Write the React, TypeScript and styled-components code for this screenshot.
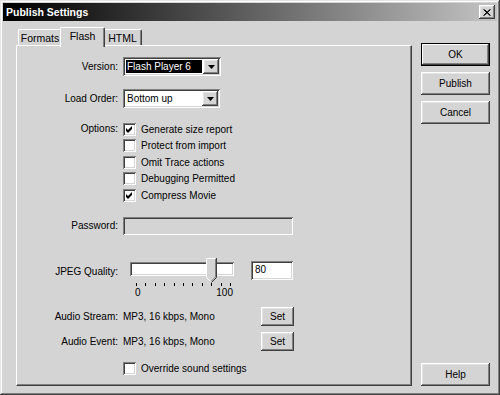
import styled, { createGlobalStyle } from "styled-components";

const FACE = "#d4d4d4";

const GlobalStyle = createGlobalStyle`
  html, body { margin: 0; padding: 0; background: ${FACE}; }
  body {
    font-family: "Liberation Sans", Arial, sans-serif;
    font-size: 10px;
    color: #000;
  }
`;

const raised = `
  background: ${FACE};
  box-shadow: inset -1px -1px #404040, inset 1px 1px #ffffff,
    inset -2px -2px #808080, inset 2px 2px #e4e4e4;
`;

const sunken = `
  box-shadow: inset 1px 1px #808080, inset -1px -1px #ffffff,
    inset 2px 2px #404040, inset -2px -2px ${FACE};
`;

const Window = styled.div`
  width: 500px;
  height: 395px;
  box-sizing: border-box;
  padding: 3px;
  background: ${FACE};
  box-shadow: inset -1px -1px #404040, inset 1px 1px #e4e4e4,
    inset -2px -2px #808080, inset 2px 2px #ffffff;
  display: flex;
  flex-direction: column;
`;

const TitleBar = styled.div`
  height: 18px;
  display: flex;
  align-items: center;
  justify-content: space-between;
  padding: 0 2px 0 3px;
  background: linear-gradient(to right, #000000 0%, #141414 12%, #c4c4c4 100%);
  color: #fff;
  font-weight: bold;
  font-size: 10.5px;
`;

const CloseButton = styled.div`
  width: 16px;
  height: 14px;
  display: flex;
  align-items: center;
  justify-content: center;
  ${raised}
`;

const Body = styled.div`
  flex: 1;
  display: flex;
  padding: 6px 7px 6px 13px;
`;

const LeftColumn = styled.div`
  width: 396px;
  display: flex;
  flex-direction: column;
`;

const TabStrip = styled.div`
  height: 18px;
  display: flex;
  align-items: flex-end;
  padding-left: 2px;
  position: relative;
  z-index: 2;
`;

const Tab = styled.div<{ $active?: boolean; $w: number }>`
  box-sizing: border-box;
  width: ${(p) => p.$w + (p.$active ? 4 : 0)}px;
  height: ${(p) => (p.$active ? 20 : 16)}px;
  margin: ${(p) => (p.$active ? "0 -2px -2px -2px" : "0")};
  background: ${FACE};
  border-top: 1px solid #fff;
  border-left: 1px solid #fff;
  border-right: 1px solid #404040;
  border-radius: 2px 2px 0 0;
  box-shadow: inset -1px 0 #808080;
  display: flex;
  justify-content: center;
  padding-top: 2px;
  font-size: 10.5px;
  position: relative;
  z-index: ${(p) => (p.$active ? 2 : 1)};
`;

const Panel = styled.div`
  flex: 1;
  box-sizing: border-box;
  border-top: 1px solid #fff;
  border-left: 1px solid #fff;
  border-right: 1px solid #404040;
  border-bottom: 1px solid #404040;
  box-shadow: inset -1px -1px #808080;
  display: flex;
  flex-direction: column;
  padding-top: 11px;
`;

const Row = styled.div<{ $mt?: number; $h?: number; $top?: boolean }>`
  display: flex;
  align-items: ${(p) => (p.$top ? "flex-start" : "center")};
  margin-top: ${(p) => p.$mt ?? 0}px;
  ${(p) => (p.$h ? `height: ${p.$h}px;` : "")}
`;

const Label = styled.div<{ $mt?: number; $lh?: number }>`
  width: 106px;
  box-sizing: border-box;
  padding-right: 5px;
  text-align: right;
  flex-shrink: 0;
  margin-top: ${(p) => p.$mt ?? 0}px;
  ${(p) => (p.$lh ? `line-height: ${p.$lh}px;` : "")}
`;

const Combo = styled.div<{ $w: number }>`
  width: ${(p) => p.$w}px;
  height: 19px;
  box-sizing: border-box;
  background: #fff;
  ${sunken}
  display: flex;
  padding: 2px;
`;

const ComboText = styled.div<{ $selected?: boolean }>`
  flex: 1;
  margin: 1px;
  padding-left: 1px;
  display: flex;
  align-items: center;
  background: ${(p) => (p.$selected ? "#000" : "transparent")};
  color: ${(p) => (p.$selected ? "#fff" : "#000")};
`;

const ArrowButton = styled.div`
  width: 16px;
  display: flex;
  align-items: center;
  justify-content: center;
  ${raised}
`;

const CheckList = styled.div`
  display: flex;
  flex-direction: column;
`;

const CheckRow = styled.div`
  height: 16.5px;
  display: flex;
  align-items: center;
  gap: 5px;
`;

const Box = styled.div`
  width: 13px;
  height: 13px;
  box-sizing: border-box;
  background: #fff;
  ${sunken}
  display: flex;
  align-items: center;
  justify-content: center;
`;

const TextField = styled.div<{ $w: number; $h: number; $disabled?: boolean }>`
  width: ${(p) => p.$w}px;
  height: ${(p) => p.$h}px;
  box-sizing: border-box;
  background: ${(p) => (p.$disabled ? FACE : "#fff")};
  ${sunken}
  padding: 3px 0 0 4px;
  line-height: 12px;
`;

const SliderBox = styled.div`
  width: 120px;
  height: 40px;
  position: relative;
  display: flex;
  flex-direction: column;
`;

const Track = styled.div`
  width: 104px;
  height: 14px;
  box-sizing: border-box;
  margin: 4px 0 0 7px;
  background: #fff;
  ${sunken}
`;

const Ticks = styled.div`
  width: 95px;
  height: 3px;
  margin: 7px 0 0 13px;
  display: flex;
  justify-content: space-between;
`;

const Tick = styled.div`
  width: 1px;
  height: 3px;
  background: #000;
`;

const TickLabels = styled.div`
  width: 98px;
  margin: 1px 0 0 12px;
  display: flex;
  justify-content: space-between;
  line-height: 11px;
`;

const Thumb = styled.svg`
  position: absolute;
  top: 0;
`;

const ValueArea = styled.div`
  width: 171px;
  display: flex;
  align-items: center;
  justify-content: space-between;
`;

const SmallButton = styled.div`
  width: 33px;
  height: 19px;
  box-sizing: border-box;
  display: flex;
  align-items: center;
  justify-content: center;
  ${raised}
`;

const ButtonColumn = styled.div`
  width: 69px;
  margin-left: 9px;
  padding-top: 16px;
  display: flex;
  flex-direction: column;
  gap: 6px;
`;

const DialogButton = styled.div<{ $default?: boolean }>`
  height: 23px;
  box-sizing: border-box;
  display: flex;
  align-items: center;
  justify-content: center;
  background: ${FACE};
  box-shadow: ${(p) =>
    p.$default
      ? `inset 0 0 0 1px #000, inset -2px -2px #404040, inset 2px 2px #ffffff, inset -3px -3px #808080`
      : `inset -1px -1px #404040, inset 1px 1px #ffffff, inset -2px -2px #808080, inset 2px 2px #e4e4e4`};
`;

const HelpButton = styled(DialogButton)`
  margin-top: auto;
`;

const Check = () => (
  <svg width="7" height="7" viewBox="0 0 7 7">
    <polygon points="0,2 2,4 6,0 6,3 2,7 0,5" fill="#000" />
  </svg>
);

const DownArrow = () => (
  <svg width="7" height="4" viewBox="0 0 7 4">
    <polygon points="0,0 7,0 3.5,4" fill="#000" />
  </svg>
);

const CheckItem = ({ label, checked }: { label: string; checked?: boolean }) => (
  <CheckRow>
    <Box>{checked && <Check />}</Box>
    <span>{label}</span>
  </CheckRow>
);

const options = [
  { label: "Generate size report", checked: true },
  { label: "Protect from import" },
  { label: "Omit Trace actions" },
  { label: "Debugging Permitted" },
  { label: "Compress Movie", checked: true },
];

const JPEG_QUALITY = 80;

export default function App() {
  // thumb centred on the tick for the current value
  const thumbLeft = 13 + (JPEG_QUALITY / 100) * 94 - 5;

  return (
    <>
      <GlobalStyle />
      <Window>
        <TitleBar>
          <span>Publish Settings</span>
          <CloseButton>
            <svg width="8" height="7" viewBox="0 0 8 7">
              <path d="M0.5 0.5 L7 6.5 M1.5 0.5 L7.5 6.5 M7 0.5 L0.5 6.5 M7.5 0.5 L1 6.5" stroke="#000" strokeWidth="1" />
            </svg>
          </CloseButton>
        </TitleBar>
        <Body>
          <LeftColumn>
            <TabStrip>
              <Tab $w={44}>Formats</Tab>
              <Tab $w={41} $active>
                Flash
              </Tab>
              <Tab $w={39}>HTML</Tab>
            </TabStrip>
            <Panel>
              <Row $h={19}>
                <Label>Version:</Label>
                <Combo $w={98}>
                  <ComboText $selected>Flash Player 6</ComboText>
                  <ArrowButton>
                    <DownArrow />
                  </ArrowButton>
                </Combo>
              </Row>
              <Row $mt={13} $h={19}>
                <Label>Load Order:</Label>
                <Combo $w={97}>
                  <ComboText>Bottom up</ComboText>
                  <ArrowButton>
                    <DownArrow />
                  </ArrowButton>
                </Combo>
              </Row>
              <Row $mt={13} $top>
                <Label $lh={16.5}>Options:</Label>
                <CheckList>
                  {options.map((o) => (
                    <CheckItem key={o.label} label={o.label} checked={o.checked} />
                  ))}
                </CheckList>
              </Row>
              <Row $mt={13} $h={18}>
                <Label>Password:</Label>
                <TextField $w={170} $h={18} $disabled />
              </Row>
              <Row $mt={23} $top>
                <Label $mt={7} $lh={13}>
                  JPEG Quality:
                </Label>
                <SliderBox>
                  <Track />
                  <Ticks>
                    {Array.from({ length: 11 }).map((_, i) => (
                      <Tick key={i} />
                    ))}
                  </Ticks>
                  <TickLabels>
                    <span>0</span>
                    <span>100</span>
                  </TickLabels>
                  <Thumb width="11" height="25" viewBox="0 0 11 25" style={{ left: thumbLeft }}>
                    <polygon points="0,0 10,0 10,19 5,24 0,19" fill={FACE} />
                    <polyline points="0.5,19 0.5,0.5 9.5,0.5" fill="none" stroke="#fff" />
                    <polyline points="10.5,0 10.5,19.5 5.5,24.5" fill="none" stroke="#404040" />
                    <polyline points="9.5,1 9.5,19 5,23.5" fill="none" stroke="#808080" />
                    <line x1="0.5" y1="19.5" x2="4.5" y2="23.5" stroke="#fff" />
                  </Thumb>
                </SliderBox>
                <TextField $w={42} $h={19} style={{ marginTop: 3, marginLeft: 8 }}>
                  {JPEG_QUALITY}
                </TextField>
              </Row>
              <Row $mt={9} $h={19}>
                <Label>Audio Stream:</Label>
                <ValueArea>
                  <span>MP3, 16 kbps, Mono</span>
                  <SmallButton>Set</SmallButton>
                </ValueArea>
              </Row>
              <Row $mt={6} $h={19}>
                <Label>Audio Event:</Label>
                <ValueArea>
                  <span>MP3, 16 kbps, Mono</span>
                  <SmallButton>Set</SmallButton>
                </ValueArea>
              </Row>
              <Row $mt={10}>
                <Label />
                <CheckList>
                  <CheckItem label="Override sound settings" />
                </CheckList>
              </Row>
            </Panel>
          </LeftColumn>
          <ButtonColumn>
            <DialogButton $default>OK</DialogButton>
            <DialogButton>Publish</DialogButton>
            <DialogButton>Cancel</DialogButton>
            <HelpButton>Help</HelpButton>
          </ButtonColumn>
        </Body>
      </Window>
    </>
  );
}
